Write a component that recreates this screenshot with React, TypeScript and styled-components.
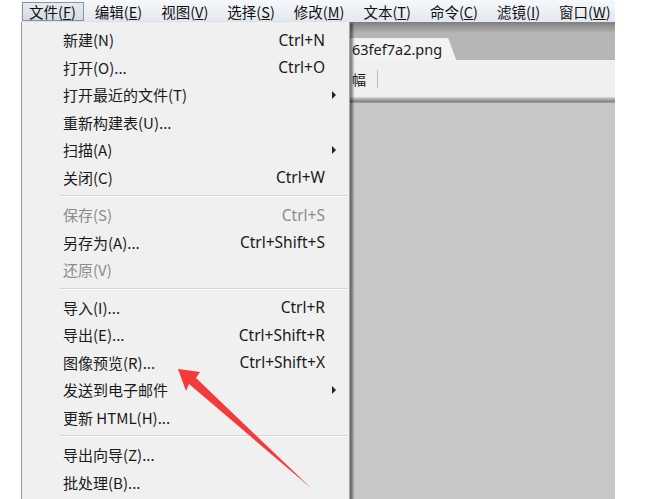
import React from 'react';
import styled, { createGlobalStyle } from 'styled-components';

const GlobalStyle = createGlobalStyle`
  html, body {
    margin: 0;
    padding: 0;
    background: #fff;
    overflow: hidden;
  }
  body {
    font-family: "Noto Sans CJK SC", "Noto Sans", sans-serif;
  }
`;

const Page = styled.div`
  position: relative;
  width: 650px;
  height: 499px;
  padding-left: 21px;
  box-sizing: border-box;
  overflow: hidden;
  background: #fff;
`;

const Window = styled.div`
  position: relative;
  width: 594px;
  height: 499px;
  display: flex;
  flex-direction: column;
  background: #c8c8c8;
`;

const MenuBar = styled.div`
  height: 22px;
  display: flex;
  align-items: center;
  gap: 4px;
  padding-left: 1px;
  background: linear-gradient(#f6f8fb, #e3e8ef);
  font-size: 14.5px;
  color: #111;
  overflow: hidden;
`;

const MenuTitle = styled.div<{ $open?: boolean }>`
  height: 19px;
  display: flex;
  align-items: center;
  padding: 0 7px 0 6px;
  box-sizing: border-box;
  white-space: nowrap;
  border: 1px solid ${(p) => (p.$open ? '#8795a3' : 'transparent')};
  background: ${(p) => (p.$open ? 'linear-gradient(#e6eaef, #d6dce4)' : 'transparent')};

  u {
    text-decoration: underline;
    text-underline-offset: 1px;
  }
`;

const TabStrip = styled.div`
  height: 38px;
  display: flex;
  align-items: flex-end;
  background: linear-gradient(#7f7f7f 0px, #a9a9a9 9px, #b6b6b6 11px, #b6b6b6 100%);
`;

const Tab = styled.div`
  height: 22px;
  margin-left: 300px;
  padding: 0 14px 0 31px;
  display: flex;
  align-items: center;
  background: #f3f3f3;
  clip-path: polygon(0 0, calc(100% - 8px) 0, 100% 100%, 0 100%);
  font-family: "Noto Sans", "Liberation Sans", sans-serif;
  font-size: 14.5px;
  color: #1b1b1b;
`;

const Toolbar = styled.div`
  height: 37px;
  display: flex;
  align-items: center;
  gap: 11px;
  padding-left: 331px;
  background: #f0f0f0;
  font-size: 14px;
  color: #1b1b1b;
`;

const ToolSep = styled.div`
  width: 1px;
  height: 18px;
  background: #b9b9b9;
`;

const ToolbarEdge = styled.div`
  height: 6px;
  background: linear-gradient(#dedede, #9c9c9c 50%, #858585 80%, #a9a9a9);
`;

const Canvas = styled.div`
  flex: 1;
  background: #c8c8c8;
`;

const Dropdown = styled.div`
  position: absolute;
  left: 0;
  top: 22px;
  width: 329px;
  height: 490px;
  box-sizing: border-box;
  padding-top: 4px;
  background: #f0f0f0;
  border-left: 1px solid #979797;
  border-right: 1px solid #a3a3a3;
  box-shadow: 3px 1px 2px rgba(0, 0, 0, 0.45);
  font-size: 15px;
`;

const Item = styled.div<{ $disabled?: boolean }>`
  height: 27.5px;
  display: grid;
  grid-template-columns: 1fr auto 24px;
  align-items: center;
  padding-left: 41px;
  color: ${(p) => (p.$disabled ? '#8c8c8c' : '#1a1a1a')};
  white-space: nowrap;
`;

const Shortcut = styled.span`
  font-family: "Noto Sans", "Liberation Sans", sans-serif;
  font-size: 15.5px;
`;

const SubArrow = styled.span`
  justify-self: start;
  margin-left: 7px;
  width: 0;
  height: 0;
  border-top: 4px solid transparent;
  border-bottom: 4px solid transparent;
  border-left: 4px solid #222;
`;

const Separator = styled.div`
  height: 0;
  margin: 4px 2px 4px 37px;
  border-top: 1px solid #d6d6d6;
  border-bottom: 1px solid #fcfcfc;
`;

const Annotation = styled.svg`
  position: absolute;
  left: 0;
  top: 0;
  pointer-events: none;
`;

type Entry =
  | { sep: true }
  | { label: string; shortcut?: string; sub?: boolean; disabled?: boolean; sep?: false };

const entries: Entry[] = [
  { label: '新建(N)', shortcut: 'Ctrl+N' },
  { label: '打开(O)...', shortcut: 'Ctrl+O' },
  { label: '打开最近的文件(T)', sub: true },
  { label: '重新构建表(U)...' },
  { label: '扫描(A)', sub: true },
  { label: '关闭(C)', shortcut: 'Ctrl+W' },
  { sep: true },
  { label: '保存(S)', shortcut: 'Ctrl+S', disabled: true },
  { label: '另存为(A)...', shortcut: 'Ctrl+Shift+S' },
  { label: '还原(V)', disabled: true },
  { sep: true },
  { label: '导入(I)...', shortcut: 'Ctrl+R' },
  { label: '导出(E)...', shortcut: 'Ctrl+Shift+R' },
  { label: '图像预览(R)...', shortcut: 'Ctrl+Shift+X' },
  { label: '发送到电子邮件', sub: true },
  { label: '更新 HTML(H)...' },
  { sep: true },
  { label: '导出向导(Z)...' },
  { label: '批处理(B)...' },
];

const menus: [string, string][] = [
  ['文件', 'F'],
  ['编辑', 'E'],
  ['视图', 'V'],
  ['选择', 'S'],
  ['修改', 'M'],
  ['文本', 'T'],
  ['命令', 'C'],
  ['滤镜', 'I'],
  ['窗口', 'W'],
];

const App = () => {
  return (
    <Page>
      <GlobalStyle />
      <Window>
        <MenuBar>
          {menus.map(([name, key], i) => (
            <MenuTitle key={name} $open={i === 0}>
              {name}(<u>{key}</u>)
            </MenuTitle>
          ))}
        </MenuBar>
        <TabStrip>
          <Tab>63fef7a2.png</Tab>
        </TabStrip>
        <Toolbar>
          <span>幅</span>
          <ToolSep />
        </Toolbar>
        <ToolbarEdge />
        <Canvas />

        <Dropdown>
          {entries.map((e, i) =>
            e.sep ? (
              <Separator key={i} />
            ) : (
              <Item key={i} $disabled={e.disabled}>
                <span>{e.label}</span>
                <Shortcut>{e.shortcut}</Shortcut>
                {e.sub ? <SubArrow /> : <span />}
              </Item>
            )
          )}
        </Dropdown>
      </Window>

      <Annotation width="650" height="499" viewBox="0 0 650 499">
        <polygon
          points="178,369 200,372 196,378 311,488 189,384 186,391"
          fill="#f43a3a"
        />
      </Annotation>
    </Page>
  );
};

export default App;
